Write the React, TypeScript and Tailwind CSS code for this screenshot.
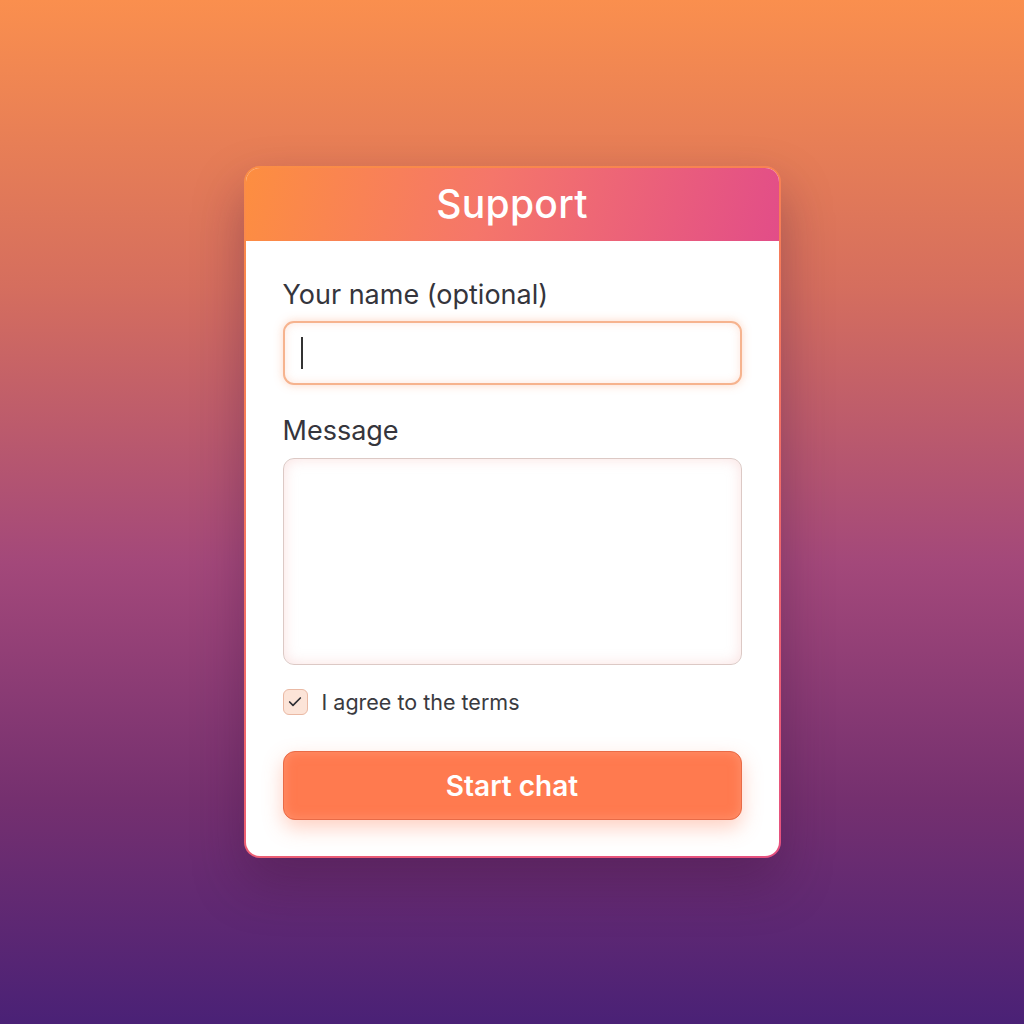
import { Check } from 'lucide-react';

const App = () => {
  return (
    <div
      className="h-screen w-full flex items-center justify-center bg-[linear-gradient(180deg,#fa8f4e_0%,#d56e5e_28%,#a3487a_55%,#75306f_78%,#4a2176_100%)]"
      style={{ fontFamily: 'Inter, "Noto Sans", sans-serif' }}
    >
      <div className="w-[537px] rounded-[16px] p-[2px] bg-[linear-gradient(160deg,#fb8e45_0%,#f47462_45%,#e5507f_100%)] shadow-[0_24px_50px_rgba(60,20,60,0.35)]">
        <div className="rounded-[14px] overflow-hidden bg-white">
          <div className="h-[73px] flex items-center justify-center bg-[linear-gradient(105deg,#fd8e40_0%,#f5766a_45%,#e24d88_100%)]">
            <h1 className="text-[39px] font-medium text-white tracking-[0.3px]">Support</h1>
          </div>

          <div className="px-[37px] pt-[38px] pb-[36px] flex flex-col">
            <label className="text-[27px] leading-[32px] text-[#35353c]">Your name (optional)</label>
            <div className="mt-[10px] h-[64px] rounded-[11px] border-2 border-[#f6b38e] bg-white shadow-[0_0_10px_rgba(250,140,90,0.35),inset_0_0_8px_rgba(250,150,110,0.25)] flex items-center px-[16px]">
              <div className="w-[2px] h-[32px] bg-[#333]" />
            </div>

            <label className="mt-[30px] text-[27px] leading-[32px] text-[#35353c]">Message</label>
            <div className="mt-[11px] h-[207px] rounded-[11px] border-[1.5px] border-[#dcc9c5] bg-white shadow-[inset_0_0_14px_rgba(240,170,165,0.35)]" />

            <div className="mt-[21px] flex items-center gap-[14px]">
              <div className="w-[25px] h-[26px] rounded-[6px] border-[1.5px] border-[#eab9a4] bg-[#fce4d8] flex items-center justify-center">
                <Check className="w-[16px] h-[16px] text-[#2f2f35]" strokeWidth={2.5} />
              </div>
              <span className="text-[21.5px] text-[#3a3a40]">I agree to the terms</span>
            </div>

            <button className="mt-[33px] h-[69px] rounded-[12px] border-[1.5px] border-[#e86b47] bg-[#ff7a4f] text-white text-[28px] font-semibold shadow-[0_8px_20px_rgba(255,120,80,0.35),inset_0_0_12px_rgba(255,170,140,0.5)]">
              Start chat
            </button>
          </div>
        </div>
      </div>
    </div>
  );
};

export default App;
